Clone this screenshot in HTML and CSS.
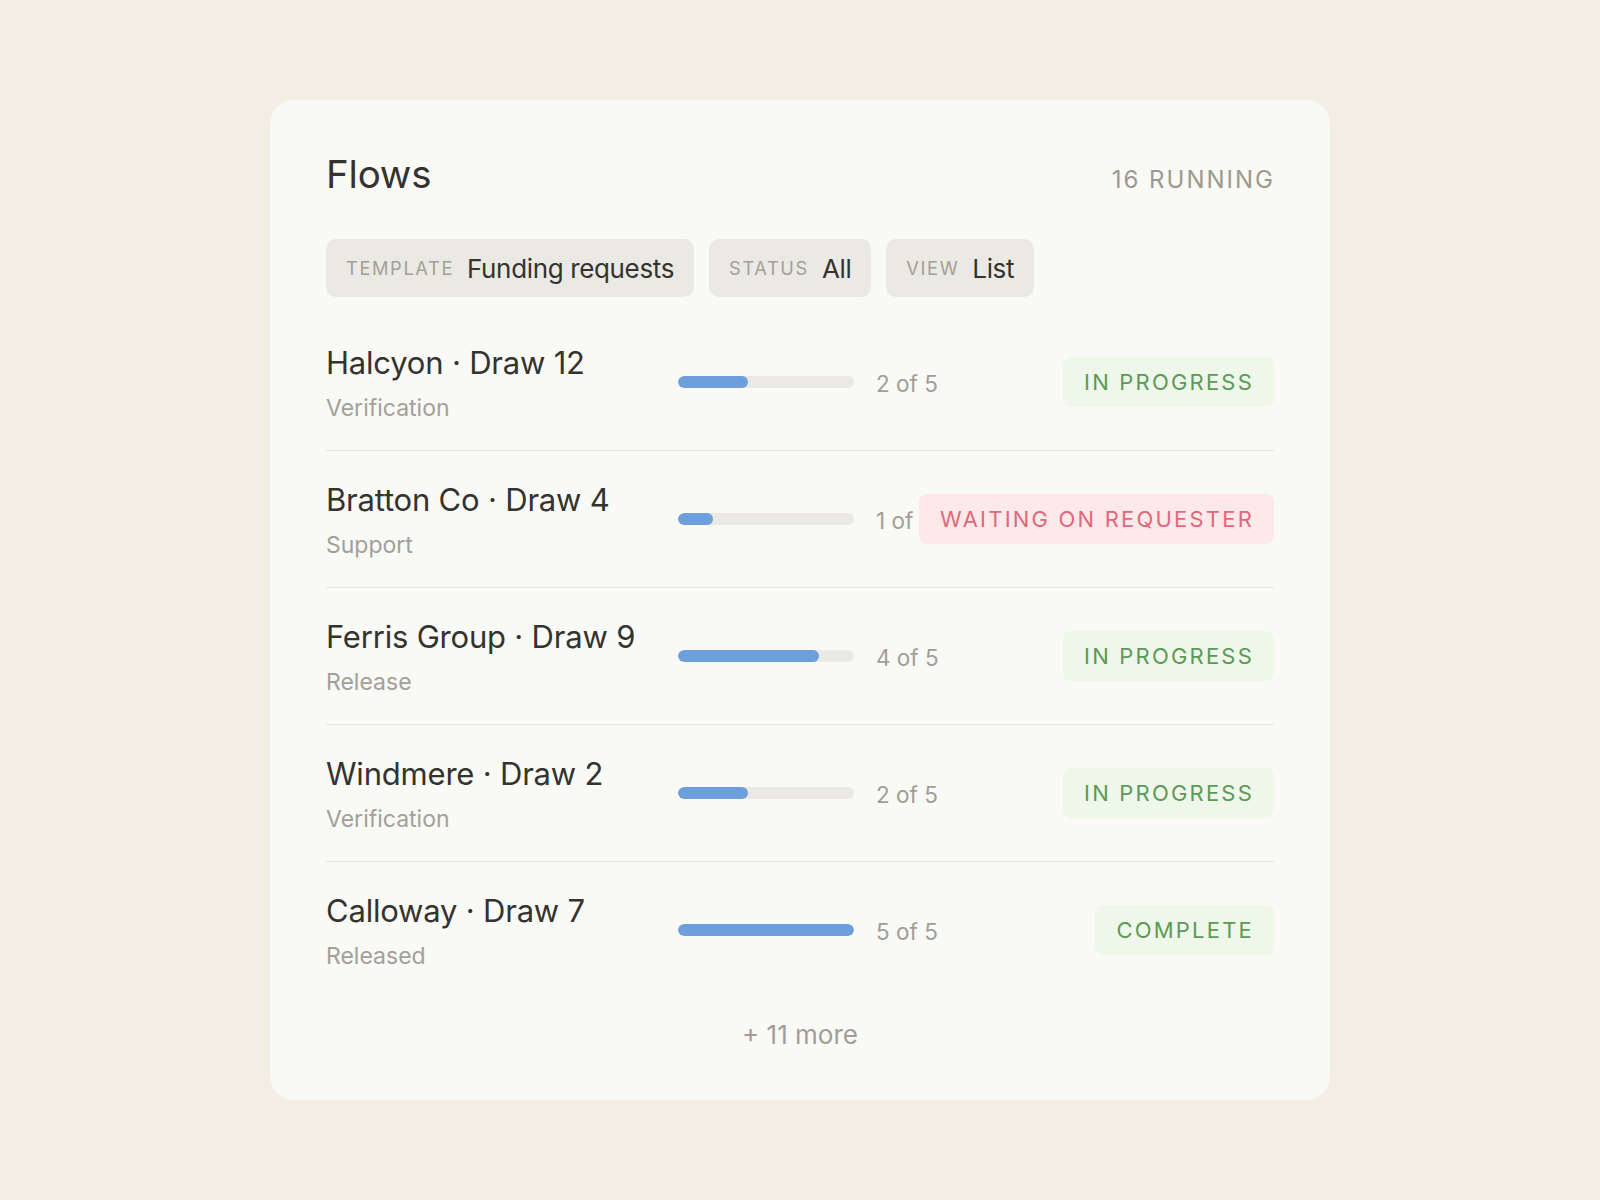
FILE: index.html
```html
<!DOCTYPE html>
<html lang="en">
<head>
<meta charset="utf-8">
<title>Flows</title>
<link rel="stylesheet" href="styles.css">
</head>
<body>
<main class="page">
  <section class="card">
    <header class="card-head">
      <h1 class="title">Flows</h1>
      <span class="running">16 RUNNING</span>
    </header>
    <div class="filters">
      <div class="chip"><span class="chip-label">TEMPLATE</span><span class="chip-value">Funding requests</span></div>
      <div class="chip"><span class="chip-label">STATUS</span><span class="chip-value">All</span></div>
      <div class="chip"><span class="chip-label">VIEW</span><span class="chip-value">List</span></div>
    </div>
    <ul class="rows">
      <li class="row">
        <div class="info"><div class="name">Halcyon · Draw 12</div><div class="stage">Verification</div></div>
        <div class="track"><div class="fill" style="width:40%"></div></div>
        <div class="count">2 of 5</div>
        <div class="status"><span class="badge ok">IN PROGRESS</span></div>
      </li>
      <li class="row">
        <div class="info"><div class="name">Bratton Co · Draw 4</div><div class="stage">Support</div></div>
        <div class="track"><div class="fill" style="width:20%"></div></div>
        <div class="count">1 of 5</div>
        <div class="status"><span class="badge warn">WAITING ON REQUESTER</span></div>
      </li>
      <li class="row">
        <div class="info"><div class="name">Ferris Group · Draw 9</div><div class="stage">Release</div></div>
        <div class="track"><div class="fill" style="width:80%"></div></div>
        <div class="count">4 of 5</div>
        <div class="status"><span class="badge ok">IN PROGRESS</span></div>
      </li>
      <li class="row">
        <div class="info"><div class="name">Windmere · Draw 2</div><div class="stage">Verification</div></div>
        <div class="track"><div class="fill" style="width:40%"></div></div>
        <div class="count">2 of 5</div>
        <div class="status"><span class="badge ok">IN PROGRESS</span></div>
      </li>
      <li class="row">
        <div class="info"><div class="name">Calloway · Draw 7</div><div class="stage">Released</div></div>
        <div class="track"><div class="fill" style="width:100%"></div></div>
        <div class="count">5 of 5</div>
        <div class="status"><span class="badge ok">COMPLETE</span></div>
      </li>
    </ul>
    <div class="more">+ 11 more</div>
  </section>
</main>
</body>
</html>
```

FILE: styles.css
```css
* { box-sizing: border-box; }

html, body {
  margin: 0;
  padding: 0;
}

body {
  background: #f2eee3;
  font-family: Inter, "Liberation Sans", sans-serif;
  color: #34332f;
}

.page {
  min-height: 1200px;
  display: flex;
  align-items: center;
  justify-content: center;
}

.card {
  width: 1060px;
  height: 1000px;
  background: #f9f9f5;
  border-radius: 24px;
  padding: 51px 56px 48px;
  display: flex;
  flex-direction: column;
}

.card-head {
  display: flex;
  justify-content: space-between;
  align-items: baseline;
}

.title {
  margin: 0;
  font-size: 38.5px;
  line-height: 46px;
  font-weight: 400;
  color: #34332f;
  letter-spacing: -0.2px;
}

.running {
  font-size: 24px;
  letter-spacing: 2px;
  color: #9c9991;
  margin-right: -1px;
}

.filters {
  display: flex;
  gap: 15px;
  margin-top: 42px;
}

.chip {
  height: 58px;
  display: flex;
  align-items: center;
  gap: 13px;
  padding: 0 20px;
  background: #ebe9e4;
  border-radius: 10px;
}

.chip-label {
  font-size: 18.3px;
  letter-spacing: 1.6px;
  color: #a3a09a;
}

.chip-value {
  font-size: 26px;
  letter-spacing: -0.35px;
  color: #34332f;
}

.rows {
  list-style: none;
  margin: 17px 0 0;
  padding: 0;
}

.row {
  height: 137px;
  display: flex;
  align-items: center;
  border-bottom: 1px solid #e6e4df;
}

.row:last-child {
  border-bottom: none;
  height: 136px;
}

.info {
  width: 352px;
  flex: none;
  align-self: flex-start;
  padding-top: 29px;
}

.name {
  font-size: 31px;
  line-height: 40px;
  color: #34332f;
  letter-spacing: -0.2px;
}

.stage {
  margin-top: 10px;
  font-size: 23px;
  line-height: 30px;
  color: #a3a09a;
}

.track {
  width: 176px;
  height: 12px;
  flex: none;
  background: #ebe9e5;
  border-radius: 6px;
  overflow: hidden;
}

.fill {
  height: 100%;
  background: #6c9fdc;
  border-radius: 6px;
}

.count {
  flex: none;
  width: 96px;
  margin-left: 22px;
  padding-top: 2px;
  font-size: 22.5px;
  color: #a19e98;
  white-space: nowrap;
}

.status {
  flex: 1;
  min-width: 0;
  display: flex;
  justify-content: flex-end;
}

.badge {
  flex: none;
  white-space: nowrap;
  height: 50px;
  display: flex;
  align-items: center;
  padding: 0 20px 0 21px;
  border-radius: 8px;
  font-size: 22px;
  letter-spacing: 2.2px;
}

.badge.ok {
  background: #eef7ea;
  color: #5c9a56;
}

.badge.warn {
  background: #fde9e9;
  color: #e0687a;
}

.more {
  margin-top: 20px;
  text-align: center;
  font-size: 26px;
  line-height: 34px;
  color: #a19e98;
}
```
